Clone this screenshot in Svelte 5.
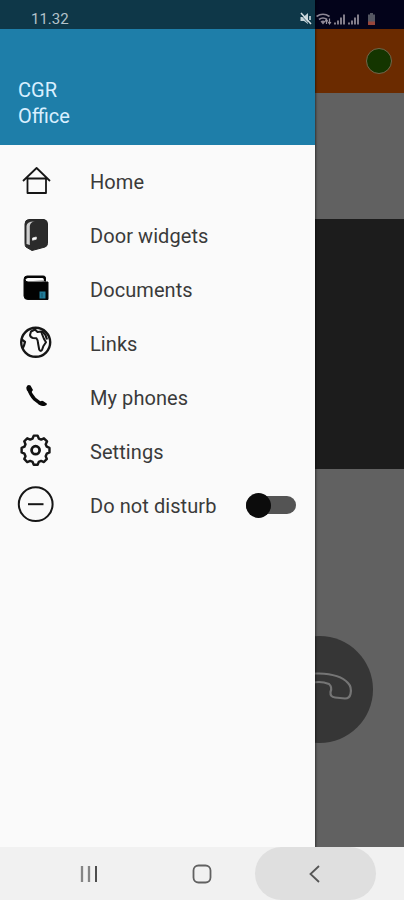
<script>
  const items = [
    { icon: 'home', label: 'Home' },
    { icon: 'door', label: 'Door widgets' },
    { icon: 'docs', label: 'Documents' },
    { icon: 'globe', label: 'Links' },
    { icon: 'phone', label: 'My phones' },
    { icon: 'gear', label: 'Settings' },
    { icon: 'dnd', label: 'Do not disturb', toggle: true }
  ];
</script>

<div class="screen">
  <div class="stage">
    <main class="page">
      <div class="page-status">
        <svg width="68" height="16" viewBox="0 0 68 16">
          <path d="M3.500 4.500Q10 0 16.500 4.500M6 7.500Q10 4.500 14 7.500" fill="none" stroke="#8d8795" stroke-width="1.700" />
          <path d="M7.500 9.500Q10 7.500 12.500 9.500L10 12.500z" fill="#8d8795" />
          <path d="M13.500 12V8M16.500 6.500v5M12 9.500l1.500-2 1.400 2M15.200 10l1.300 2 1.400-2" fill="none" stroke="#99939f" stroke-width="1.200" />
          <path d="M22 10.500v2M25 8.500v4M28 5.500v7M31 2.500v10" stroke="#88838f" stroke-width="1.900" />
          <path d="M36 10.500v2M39 8.500v4M42 5.500v7M45 2.500v10" stroke="#88838f" stroke-width="1.900" />
          <path d="M55 2.500h2V1h3v1.500h2V13h-7z" fill="#555762" />
          <path d="M55 9.500h7V13h-7z" fill="#98463b" />
        </svg>
      </div>
      <header class="app-bar"><span class="presence"></span></header>
      <section class="upper"></section>
      <section class="video"></section>
      <section class="call-area">
        <div class="call">
          <svg width="106" height="106" viewBox="0 0 106 106">
            <path d="M20 48Q27 37 53 37.500Q74 38 82 47Q86 51 84.500 58Q83.500 62.500 79 62.500L69 61.500Q64 61 64.500 56Q66.500 51 63 48Q58 46 53 46Q46 46 40 48Q37 51 38 56Q39 61 34 61.500L24 62.500Q17 56 20 48Z" fill="none" stroke="#757575" stroke-width="2.200" stroke-linejoin="round" />
          </svg>
        </div>
      </section>
    </main>

    <aside class="drawer">
      <div class="drawer-status">
        <span class="time">11.32</span>
        <svg width="14" height="14" viewBox="0 0 14 14">
          <path d="M1.500 5h3L9 1v11L5 9H1.500z" fill="#c5d3d8" />
          <path d="M2 1l10 11M11 4v4" stroke="#d5e0e4" stroke-width="1.500" />
          <path d="M1 2l10 11" stroke="#103848" stroke-width=".7" />
        </svg>
      </div>
      <div class="account">
        <div>CGR</div>
        <div>Office</div>
      </div>
      <nav>
        {#each items as item}
          <div class="row">
            <span class="icon">
              <svg width="40" height="40" viewBox="0 0 40 40" fill="none" stroke="#161616" stroke-linejoin="round">
                {#if item.icon === 'home'}
                  <path d="M7 20L20.600 7L34 20M11.500 17.500V32H30V17.500M10.500 17.500H31" stroke-width="1.800" />
                {:else if item.icon === 'door'}
                  <path d="M12.500 4.500H28Q31.500 5 31.500 9V28.500Q31.500 31 29 32L16 35.500L10 32Q9 31 9 28V9Q9 5 12.500 4.500Z" fill="#2b2b2b" stroke="#262626" stroke-width="1" />
                  <path d="M19 6.500Q14.500 6.500 13.800 11V30L10.500 29V11Q11 6 19 6.500Z" fill="#cfcfcf" stroke="none" />
                  <path d="M16.500 23l3.800-1v2.200l-3.800 1z" fill="#fff" stroke="#e5e5e5" stroke-width=".8" />
                {:else if item.icon === 'docs'}
                  <path d="M29.500 12.500V9Q29.500 7 27.500 7H11Q8 7 8 10.500V27Q8 30.500 12 30.500H32V13H12Q9 13 9 10" fill="#020202" stroke="#080808" stroke-width="1" />
                  <path d="M12 9H26.500Q28 9 28 11.800H12Q10 11.500 10 10.400T12 9Z" fill="#fafafa" stroke="none" />
                  <path d="M23.500 22.500h6v7h-6z" fill="#217c99" stroke="none" />
                  <path d="M26 24v4.500" stroke="#145167" />
                {:else if item.icon === 'globe'}
                  <circle cx="19.700" cy="19.300" r="14.500" stroke-width="2.400" />
                  <path d="M19 6.500L15 8.500L14 12Q14.500 14.500 17 15L20.500 15.300Q22 17 22 20L23.200 26.500Q24.500 29 26 27L27.300 23.300L30 19.300L28 16L26 11L25.300 8.500L21.500 9Z" stroke-width="2" />
                  <path d="M26 8l3.500 4L31 16.500M5.700 16.500L9 19L8 22.500L6.800 25" stroke-width="2.200" />
                {:else if item.icon === 'phone'}
                  <path d="M12.300 11Q14.500 18 18.500 22Q22 25.500 28 27.500" stroke="#080808" stroke-width="3.300" />
                  <path d="M10.300 10.500Q11.500 7 14.500 8.500L17 13Q16 15.500 13 15.500Q9.800 13 10.300 10.500ZM24 25.500Q25 23 27 24L31 26.700Q31 28.300 29 28.700Q25.500 29.500 22 27Z" fill="#080808" stroke="none" />
                {:else if item.icon === 'gear'}
                  <path d="M16.800 8L18 5H22L23.200 8L25.600 9L28.500 7.700L31.700 10.900L30.300 13.800L31.400 16.400L34.200 17.700V22.300L31.400 23.600L30.300 26.200L31.500 29L28.500 32.200L25.600 31L23.200 32L22 35H18L16.800 32L14.300 31L11.300 32.200L8.200 29L9.500 26.200L8.400 23.600L5.500 22.300V17.700L8.400 16.400L9.500 13.800L8.200 10.900L11.300 7.700L14.300 9Z" stroke-width="2.500" transform="translate(.3 -.2) scale(.97)" />
                  <circle cx="19.600" cy="19.200" r="4" stroke-width="2.800" />
                {:else}
                  <circle cx="19.700" cy="19.200" r="16.900" stroke-width="2" />
                  <path d="M12 19.200h15.500" stroke-width="2" />
                {/if}
              </svg>
            </span>
            <span class="label">{item.label}</span>
            {#if item.toggle}
              <span class="switch"><span class="thumb"></span></span>
            {/if}
          </div>
        {/each}
      </nav>
    </aside>
  </div>

  <footer>
    <div class="key">
      <svg width="22" height="22" viewBox="0 0 22 22" fill="none">
        <path d="M4 3v16M11 3v16" stroke="#858585" stroke-width="2.300" /><path d="M18 3v16" stroke="#4e4e4e" stroke-width="2" />
      </svg>
    </div>
    <div class="key">
      <svg width="22" height="22" viewBox="0 0 22 22" fill="none" stroke="#616161" stroke-width="1.800">
        <rect x="2.500" y="2.500" width="17" height="17" rx="5" />
      </svg>
    </div>
    <div class="key pressed">
      <svg width="22" height="22" viewBox="0 0 22 22" fill="none" stroke="#555" stroke-width="1.800">
        <path d="M14 3L5.500 11L14 19" />
      </svg>
    </div>
  </footer>
</div>

<style>
  .screen {
    width: 404px;
    height: 900px;
    display: flex;
    flex-direction: column;
    overflow: hidden;
    font-family: Roboto, 'Liberation Sans', sans-serif;
  }
  .stage {
    position: relative;
    height: 847px;
    flex: none;
  }
  .page {
    height: 100%;
    display: flex;
    flex-direction: column;
    background: #616161;
  }
  .page-status {
    height: 29px;
    box-sizing: border-box;
    padding: 12px 23px 0 0;
    display: flex;
    justify-content: flex-end;
    background: #03031a;
  }
  .app-bar {
    height: 64px;
    box-sizing: border-box;
    padding: 0 12px 0 0;
    display: flex;
    align-items: center;
    justify-content: flex-end;
    background: #6b2b00;
  }
  .presence {
    box-sizing: border-box;
    width: 26px;
    height: 26px;
    border: 1px solid #73674c;
    border-radius: 50%;
    background: #143500;
  }
  .upper {
    height: 126px;
  }
  .video {
    height: 250px;
    background: #1c1c1c;
  }
  .call-area {
    flex: 1;
    padding: 167px 31px 0 0;
    display: flex;
    justify-content: flex-end;
    align-items: flex-start;
  }
  .call {
    width: 107px;
    height: 107px;
    border-radius: 50%;
    background: #363636;
  }
  .drawer {
    position: absolute;
    top: 0;
    left: 0;
    width: 315px;
    height: 847px;
    background: #fafafa;
    box-shadow: 0 0 2px 1px rgba(0, 0, 0, 0.5);
    clip-path: inset(0 -4px 0 0);
  }
  .drawer-status {
    height: 29px;
    box-sizing: border-box;
    padding: 12px 2px 0 31px;
    display: flex;
    justify-content: space-between;
    background: #0e3748;
  }
  .time {
    font-size: 15px;
    line-height: 15px;
    color: #b3c2ca;
  }
  .account {
    height: 116px;
    box-sizing: border-box;
    padding: 48px 0 0 18px;
    background: #1e7ea9;
    color: #d9efff;
    font-size: 20px;
    line-height: 26px;
  }
  nav {
    padding-top: 9px;
  }
  .row {
    height: 54px;
    display: flex;
    align-items: center;
  }
  .icon {
    width: 90px;
    box-sizing: border-box;
    padding-left: 16px;
    display: flex;
  }
  .label {
    padding-top: 1px;
    font-size: 20px;
    line-height: 26px;
    letter-spacing: 0.07px;
    color: #3a3a3a;
    white-space: nowrap;
  }
  .switch {
    width: 50px;
    height: 18px;
    margin: 0 19px 0 auto;
    display: flex;
    align-items: center;
    border-radius: 9px;
    background: #545454;
  }
  .thumb {
    width: 25px;
    height: 25px;
    flex: none;
    border-radius: 50%;
    background: #0c0c0c;
  }
  footer {
    height: 53px;
    box-sizing: border-box;
    padding-left: 32px;
    display: flex;
    background: #f1f1f1;
  }
  .key {
    width: 113px;
    height: 53px;
    box-sizing: border-box;
    padding-top: 1px;
    flex: none;
    display: flex;
    align-items: center;
    justify-content: center;
  }
  .pressed {
    width: 121px;
    margin-left: -3px;
    border-radius: 27px;
    background: #dfdfdf;
  }
</style>
